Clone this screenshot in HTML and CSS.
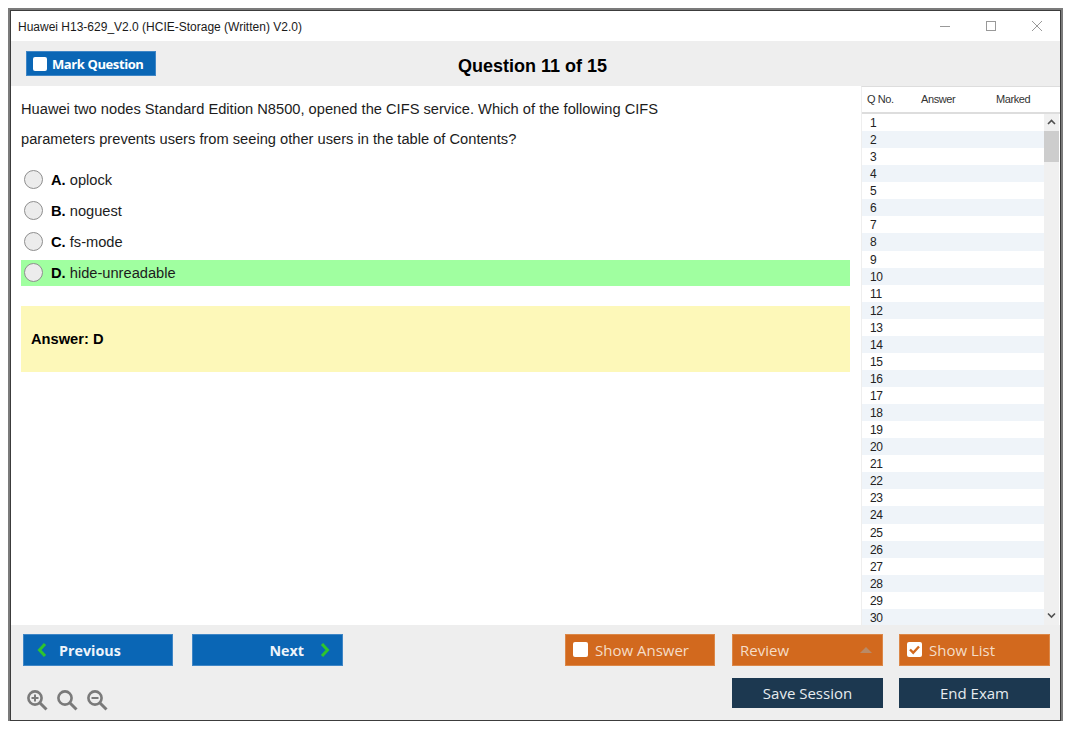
FILE: index.html
```html
<!DOCTYPE html>
<html lang="en">
<head>
<meta charset="utf-8">
<title>Huawei H13-629_V2.0</title>
<link rel="stylesheet" href="styles.css">
</head>
<body>
<div class="window">
  <header class="titlebar">
    <span class="title">Huawei H13-629_V2.0 (HCIE-Storage (Written) V2.0)</span>
    <div class="controls">
      <svg class="ctl" width="12" height="12" viewBox="0 0 12 12"><path d="M1 6.500H11" stroke="#999" fill="none"/></svg>
      <svg class="ctl" width="12" height="12" viewBox="0 0 12 12"><rect x="1.500" y="1.500" width="9" height="9" stroke="#999" fill="none"/></svg>
      <svg class="ctl" width="12" height="12" viewBox="0 0 12 12"><path d="M1 1L11 11M11 1L1 11" stroke="#999" fill="none"/></svg>
    </div>
  </header>
  <div class="toolbar">
    <button class="mark"><span class="box small"></span>Mark Question</button>
    <h1 class="qtitle">Question 11 of 15</h1>
    <span></span>
  </div>
  <div class="middle">
    <main class="content">
      <p class="question">Huawei two nodes Standard Edition N8500, opened the CIFS service. Which of the following CIFS parameters prevents users from seeing other users in the table of Contents?</p>
      <div class="options">
        <div class="option"><span class="radio"></span><span><b>A.</b> oplock</span></div>
        <div class="option"><span class="radio"></span><span><b>B.</b> noguest</span></div>
        <div class="option"><span class="radio"></span><span><b>C.</b> fs-mode</span></div>
        <div class="option correct"><span class="radio"></span><span><b>D.</b> hide-unreadable</span></div>
      </div>
      <div class="answer">Answer: D</div>
    </main>
    <aside class="panel">
      <div class="phead"><span class="c1">Q No.</span><span class="c2">Answer</span><span class="c3">Marked</span></div>
      <div class="pbody">
        <div class="rows">
          <div class="row">1</div><div class="row">2</div><div class="row">3</div><div class="row">4</div><div class="row">5</div>
          <div class="row">6</div><div class="row">7</div><div class="row">8</div><div class="row">9</div><div class="row">10</div>
          <div class="row">11</div><div class="row">12</div><div class="row">13</div><div class="row">14</div><div class="row">15</div>
          <div class="row">16</div><div class="row">17</div><div class="row">18</div><div class="row">19</div><div class="row">20</div>
          <div class="row">21</div><div class="row">22</div><div class="row">23</div><div class="row">24</div><div class="row">25</div>
          <div class="row">26</div><div class="row">27</div><div class="row">28</div><div class="row">29</div><div class="row">30</div>
        </div>
        <div class="scrollbar">
          <svg class="sarrow" width="15" height="17" viewBox="0 0 15 17"><path d="M4 10L7.500 6.500L11 10" stroke="#505050" stroke-width="1.600" fill="none"/></svg>
          <div class="thumb"></div>
          <svg class="sarrow down" width="15" height="17" viewBox="0 0 15 17"><path d="M4 6.500L7.500 10L11 6.500" stroke="#505050" stroke-width="1.600" fill="none"/></svg>
        </div>
      </div>
    </aside>
  </div>
  <footer class="bottom">
    <div class="left">
      <div class="nav">
        <button class="btn blue prev"><svg width="12" height="16" viewBox="0 0 12 16"><path d="M9 2L3.500 8L9 14" stroke="#2ec52e" stroke-width="3" fill="none"/></svg>Previous</button>
        <button class="btn blue next">Next<svg width="12" height="16" viewBox="0 0 12 16"><path d="M3 2L8.500 8L3 14" stroke="#2ec52e" stroke-width="3" fill="none"/></svg></button>
      </div>
      <div class="zooms">
        <svg width="21" height="21" viewBox="0 0 21 21"><circle cx="8" cy="8" r="6.600" stroke="#7a7a7a" stroke-width="2.600" fill="none"/><path d="M12.500 12.500L19.500 19.500" stroke="#7a7a7a" stroke-width="3" fill="none"/><path d="M4.500 8H11.500M8 4.500V11.500" stroke="#7a7a7a" stroke-width="2" fill="none"/></svg>
        <svg width="21" height="21" viewBox="0 0 21 21"><circle cx="8" cy="8" r="6.600" stroke="#7a7a7a" stroke-width="2.600" fill="none"/><path d="M12.500 12.500L19.500 19.500" stroke="#7a7a7a" stroke-width="3" fill="none"/></svg>
        <svg width="21" height="21" viewBox="0 0 21 21"><circle cx="8" cy="8" r="6.600" stroke="#7a7a7a" stroke-width="2.600" fill="none"/><path d="M12.500 12.500L19.500 19.500" stroke="#7a7a7a" stroke-width="3" fill="none"/><path d="M4.500 8H11.500" stroke="#7a7a7a" stroke-width="2" fill="none"/></svg>
      </div>
    </div>
    <div class="actions">
      <button class="btn orange first"><span class="box"></span>Show Answer</button>
      <button class="btn orange review">Review<svg width="12" height="6" viewBox="0 0 12 6"><path d="M0 6L6 0L12 6Z" fill="#b98a66"/></svg></button>
      <button class="btn orange"><span class="box"><svg width="15" height="15" viewBox="0 0 15 15"><path d="M3 7.500L6.200 10.700L12 4.500" stroke="#d2691e" stroke-width="2.400" fill="none"/></svg></span>Show List</button>
      <span></span>
      <button class="btn navy">Save Session</button>
      <button class="btn navy">End Exam</button>
    </div>
  </footer>
</div>
</body>
</html>
```
FILE: styles.css
```css
* { box-sizing: border-box; }
html, body { margin: 0; padding: 0; background: #fff; }
body { padding: 10px 0 0 10px; font-family: "Liberation Sans", Arial, sans-serif; color: #111; }
button { font: inherit; border: 0; padding: 0; margin: 0; }

.window {
  width: 1051px;
  height: 711px;
  background: #fff;
  border: 1px solid #3c3c3c;
  outline: 2px solid #7b7b7b;
  display: flex;
  flex-direction: column;
}

.titlebar { height: 30px; flex: none; display: flex; align-items: center; justify-content: space-between; padding: 1px 0 0 7px; }
.title { font-size: 12px; color: #1a1a1a; }
.controls { display: flex; gap: 34px; padding: 0 17px 2px 0; }
.ctl { display: block; }

.toolbar {
  height: 45px; flex: none; background: #eee;
  display: grid; grid-template-columns: 1fr auto 1fr; align-items: start;
  padding: 10px 21px 0 15px;
}
.mark {
  justify-self: start; width: 130px; height: 25px;
  background: #0a66b5; color: #fff;
  font-family: "Open Sans", sans-serif; font-size: 13px; font-weight: 700; letter-spacing: -0.4px;
  display: flex; align-items: center; gap: 5px; padding-left: 6px;
  border: 1px solid #3f86c6;
}
.qtitle { margin: 5px 0 0; font-size: 18px; font-weight: 700; line-height: 21px; color: #000; }

.middle { flex: 1; min-height: 0; display: flex; }
.content { width: 850px; flex: none; padding: 8px 11px 0 10px; }
.question { margin: 0; font-size: 14.670px; line-height: 30px; color: #1c1c1c; width: 660px; }

.options { margin-top: 13px; display: flex; flex-direction: column; gap: 5px; }
.option { height: 26px; display: flex; align-items: center; gap: 8px; padding-left: 3px; font-size: 14.670px; color: #1c1c1c; }
.option b { color: #000; }
.option.correct { background: #a0ffa0; }
.radio { width: 19px; height: 19px; border-radius: 50%; background: #ececec; border: 1px solid #8e8e8e; flex: none; margin-bottom: 1px; }

.answer {
  margin-top: 20px; height: 66px; background: #fdf8b9;
  display: flex; align-items: center; padding-left: 10px;
  font-size: 14.670px; font-weight: 700; color: #000;
}

.panel { flex: 1; display: flex; flex-direction: column; border-top: 1px solid #ddd; border-left: 1px solid #eee; }
.phead {
  height: 27px; flex: none;
  display: grid; grid-template-columns: 54px 75px 1fr; align-items: center;
  padding: 0 0 2px 5px; border-bottom: 2px solid #ddd;
  font-size: 11px; letter-spacing: -0.4px; color: #333;
}
.pbody { flex: 1; min-height: 0; display: flex; border-right: 1px solid #fff; }
.rows { width: 182px; flex: none; overflow: hidden; }
.row { height: 17.070px; line-height: 18px; padding-left: 8px; font-size: 12px; letter-spacing: -0.3px; color: #222; }
.row:nth-child(even) { background: #eff4f9; }
.scrollbar { flex: 1; background: #f0f0f0; display: flex; flex-direction: column; }
.sarrow { display: block; flex: none; }
.sarrow.down { margin-top: auto; margin-bottom: 1px; }
.thumb { height: 31px; background: #cdcdcd; flex: none; }

.bottom {
  height: 95px; flex: none; background: #eee;
  display: flex; justify-content: space-between;
  padding: 9px 10px 0 12px;
}
.btn {
  color: #fff; display: flex; align-items: center;
  font-family: "Open Sans", sans-serif;
}
.blue {
  width: 151px; height: 32px; background: #0a66b5; font-weight: 700; font-size: 14.300px;
  border: 1px solid #3f86c6; color: #eef4fa;
}
.prev { width: 150px; padding-left: 12px; gap: 11px; }
.next { padding-right: 11px; gap: 15px; justify-content: flex-end; }
.nav { display: flex; gap: 19px; }
.zooms { display: flex; gap: 9px; margin-top: 24px; padding-left: 4px; }
.zooms svg { display: block; }

.actions { display: grid; grid-template-columns: 151px 151px 151px; column-gap: 16px; row-gap: 12px; grid-template-rows: 32px 30px; }
.orange { background: #d2691e; font-size: 15px; padding: 0 0 1px 7px; gap: 7px; color: #f5ddc8; border: 1px solid #dc8747; }
.orange.first { width: 150px; }
.review { padding-right: 10px; justify-content: space-between; }
.navy { background: #1c3850; font-size: 15px; padding-bottom: 1px; justify-content: center; color: #e6ebef; }

.box { width: 15px; height: 15px; background: #fff; border-radius: 2px; flex: none; display: block; }
.box svg { display: block; }
.box.small { width: 14px; height: 14px; }
```
